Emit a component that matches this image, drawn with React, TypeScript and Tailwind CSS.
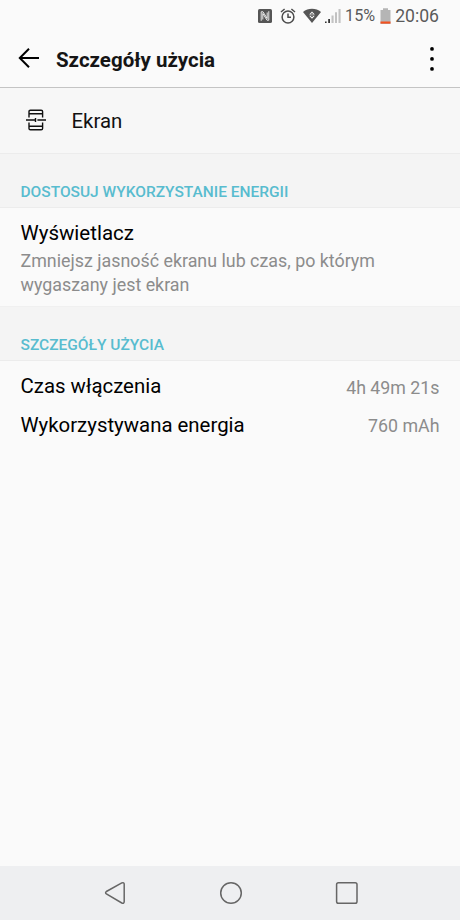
import React from "react";

interface DetailRowProps {
    label: string;
    value: string;
}

function SectionHeader({ title }: { title: string }) {
    return (
        <div className="h-[54px] pl-[20.5px] pt-[26px] bg-[#f4f4f4] border-b border-[#ececec]">
            <h2 className="text-[15.5px] leading-6 font-medium text-[#58bccf]">{title}</h2>
        </div>
    );
}

function DetailRow({ label, value }: DetailRowProps) {
    return (
        <div className="h-[38.5px] flex items-center justify-between pl-[20.5px] pr-[20.5px]">
            <span className="text-[20.4px] leading-6 text-black">{label}</span>
            <span className="text-[17.8px] leading-6 pt-[3px] text-[#8c8c8c]">{value}</span>
        </div>
    );
}

function StatusBar() {
    return (
        <div className="h-8 flex items-center justify-end pr-[21px] text-[#5a5a5a]">
            <svg className="w-4 h-4 mr-[7px]" viewBox="0 0 16 16" fill="none">
                <rect x="1" y="1" width="14" height="14" rx="1.6" fill="#555" />
                <path d="M4.2 12.8V3.8H6L10.2 10.5V4.5M11.8 3.2V12.2H10L5.8 5.5V11.5" stroke="#fafafa" strokeWidth="0.9" />
            </svg>
            <svg className="w-4 h-4 mr-[7px]" viewBox="0 0 16 16" fill="none" stroke="#4c4c4c" strokeWidth="1.5">
                <circle cx="8" cy="9" r="5.9" />
                <path d="M1 4L4.6 1M15 4L11.4 1M8 5.5V9.2H11" />
            </svg>
            <svg className="w-[18px] h-4 mr-[4px]" viewBox="0 0 18 16">
                <path d="M0 4C5 -0.2 13 -0.2 18 4L9 15Z" fill="#555" />
                <path d="M6.2 6.4L9 3.4L11.8 6.4ZM6.2 7.8H11.8L9 10.8Z" fill="#fafafa" />
                <path d="M8 5.2H10V6.4H8ZM8 7.8H10V9H8Z" fill="#777" />
            </svg>
            <svg className="w-4 h-4 mr-[4px]" viewBox="0 0 16 16">
                <path d="M0 13.5H1.6V15H0ZM3.2 11H5V15H3.2Z" fill="#333" />
                <path d="M6.5 7.5H8.6V15H6.5ZM10 4.3H12V15H10ZM13.5 1H15.6V15H13.5Z" fill="#c2c2c2" />
            </svg>
            <span className="text-[16.2px] leading-8 mr-[5px]">15%</span>
            <svg className="w-[11px] h-4 mr-[4px]" viewBox="0 0 11 16">
                <path d="M0.5 2H3V0.3H8V2H10.5V16H0.5Z" fill="#b5b5b5" />
                <path d="M0.5 13.5H10.5V15.6H0.5Z" fill="#f4511e" />
            </svg>
            <span className="text-[17.6px] leading-8">20:06</span>
        </div>
    );
}

function AppBar() {
    return (
        <header className="h-[56px] flex items-center border-b border-[#c4c4c4] pl-[18px] pr-[26px]">
            <svg className="w-[22px] h-[22px] mb-[1px]" viewBox="0 0 22 22" fill="none" stroke="#000" strokeWidth="2">
                <path d="M21 10H2M11 0.8L1.8 10L11 19.2" />
            </svg>
            <h1 className="ml-[16px] text-[20.5px] leading-6 font-bold text-[#151515]">Szczegóły użycia</h1>
            <svg className="ml-auto mb-[2px] w-1 h-6" viewBox="0 0 4 24">
                <circle cx="2" cy="1.9" r="1.9" />
                <circle cx="2" cy="11.9" r="1.9" />
                <circle cx="2" cy="21.9" r="1.9" />
            </svg>
        </header>
    );
}

function NavigationBar() {
    return (
        <nav className="h-[54px] mt-auto flex items-center bg-[#eeeff1] pl-[104px]">
            <svg className="w-[22px] h-6" viewBox="0 0 22 24" fill="none" stroke="#666" strokeWidth="1.5">
                <path d="M17.8 1.9L2.4 10.5Q0.8 11.7 2.4 12.9L17.8 22Q20.2 22.8 20.2 20.5V3.3Q20.2 1 17.8 1.9Z" />
            </svg>
            <svg className="w-6 h-6 ml-[93px]" viewBox="0 0 24 24" fill="none" stroke="#666" strokeWidth="1.5">
                <circle cx="12" cy="12" r="10.3" />
            </svg>
            <svg className="w-6 h-6 ml-[92px]" viewBox="0 0 24 24" fill="none" stroke="#666" strokeWidth="1.5">
                <rect x="1.6" y="1.8" width="20.4" height="20.4" rx="1.8" />
            </svg>
        </nav>
    );
}

export default function App() {
    return (
        <div className="w-[460px] h-[920px] flex flex-col overflow-hidden bg-[#fafafa] font-['Roboto','Noto_Sans',sans-serif]">
            <StatusBar />
            <AppBar />

            <div className="h-[66px] flex items-center bg-[#f7f7f7] border-b border-[#ececec] pl-[26px]">
                <svg className="w-5 h-[22px] mb-[1px]" viewBox="0 0 20 22" fill="none" stroke="#111" strokeWidth="1.4">
                    <path d="M3 8.6V2.6Q3 1.2 4.4 1.2H15.2Q16.6 1.2 16.6 2.6V8.6M3 13.4V19.4Q3 20.8 4.4 20.8H15.2Q16.6 20.8 16.6 19.4V13.4M3 4.8H16.6M3 17.3H16.6" />
                    <path d="M0 11H9.2M11.4 11H20M9.5 9.1V12.9" />
                </svg>
                <span className="ml-[25.5px] text-[20.4px] leading-6 text-[#111]">Ekran</span>
            </div>

            <SectionHeader title="DOSTOSUJ WYKORZYSTANIE ENERGII" />
            <div className="h-[99px] pl-[20.5px] pt-[13px] border-b border-[#f0f0f0]">
                <p className="text-[20.5px] leading-6 text-black">Wyświetlacz</p>
                <p className="pt-[4px] text-[17.85px] leading-6 text-[#8c8c8c]">
                    Zmniejsz jasność ekranu lub czas, po którym
                    <br />
                    wygaszany jest ekran
                </p>
            </div>

            <SectionHeader title="SZCZEGÓŁY UŻYCIA" />
            <div className="pt-[6px]">
                <DetailRow label="Czas włączenia" value="4h 49m 21s" />
                <DetailRow label="Wykorzystywana energia" value="760 mAh" />
            </div>

            <NavigationBar />
        </div>
    );
}
